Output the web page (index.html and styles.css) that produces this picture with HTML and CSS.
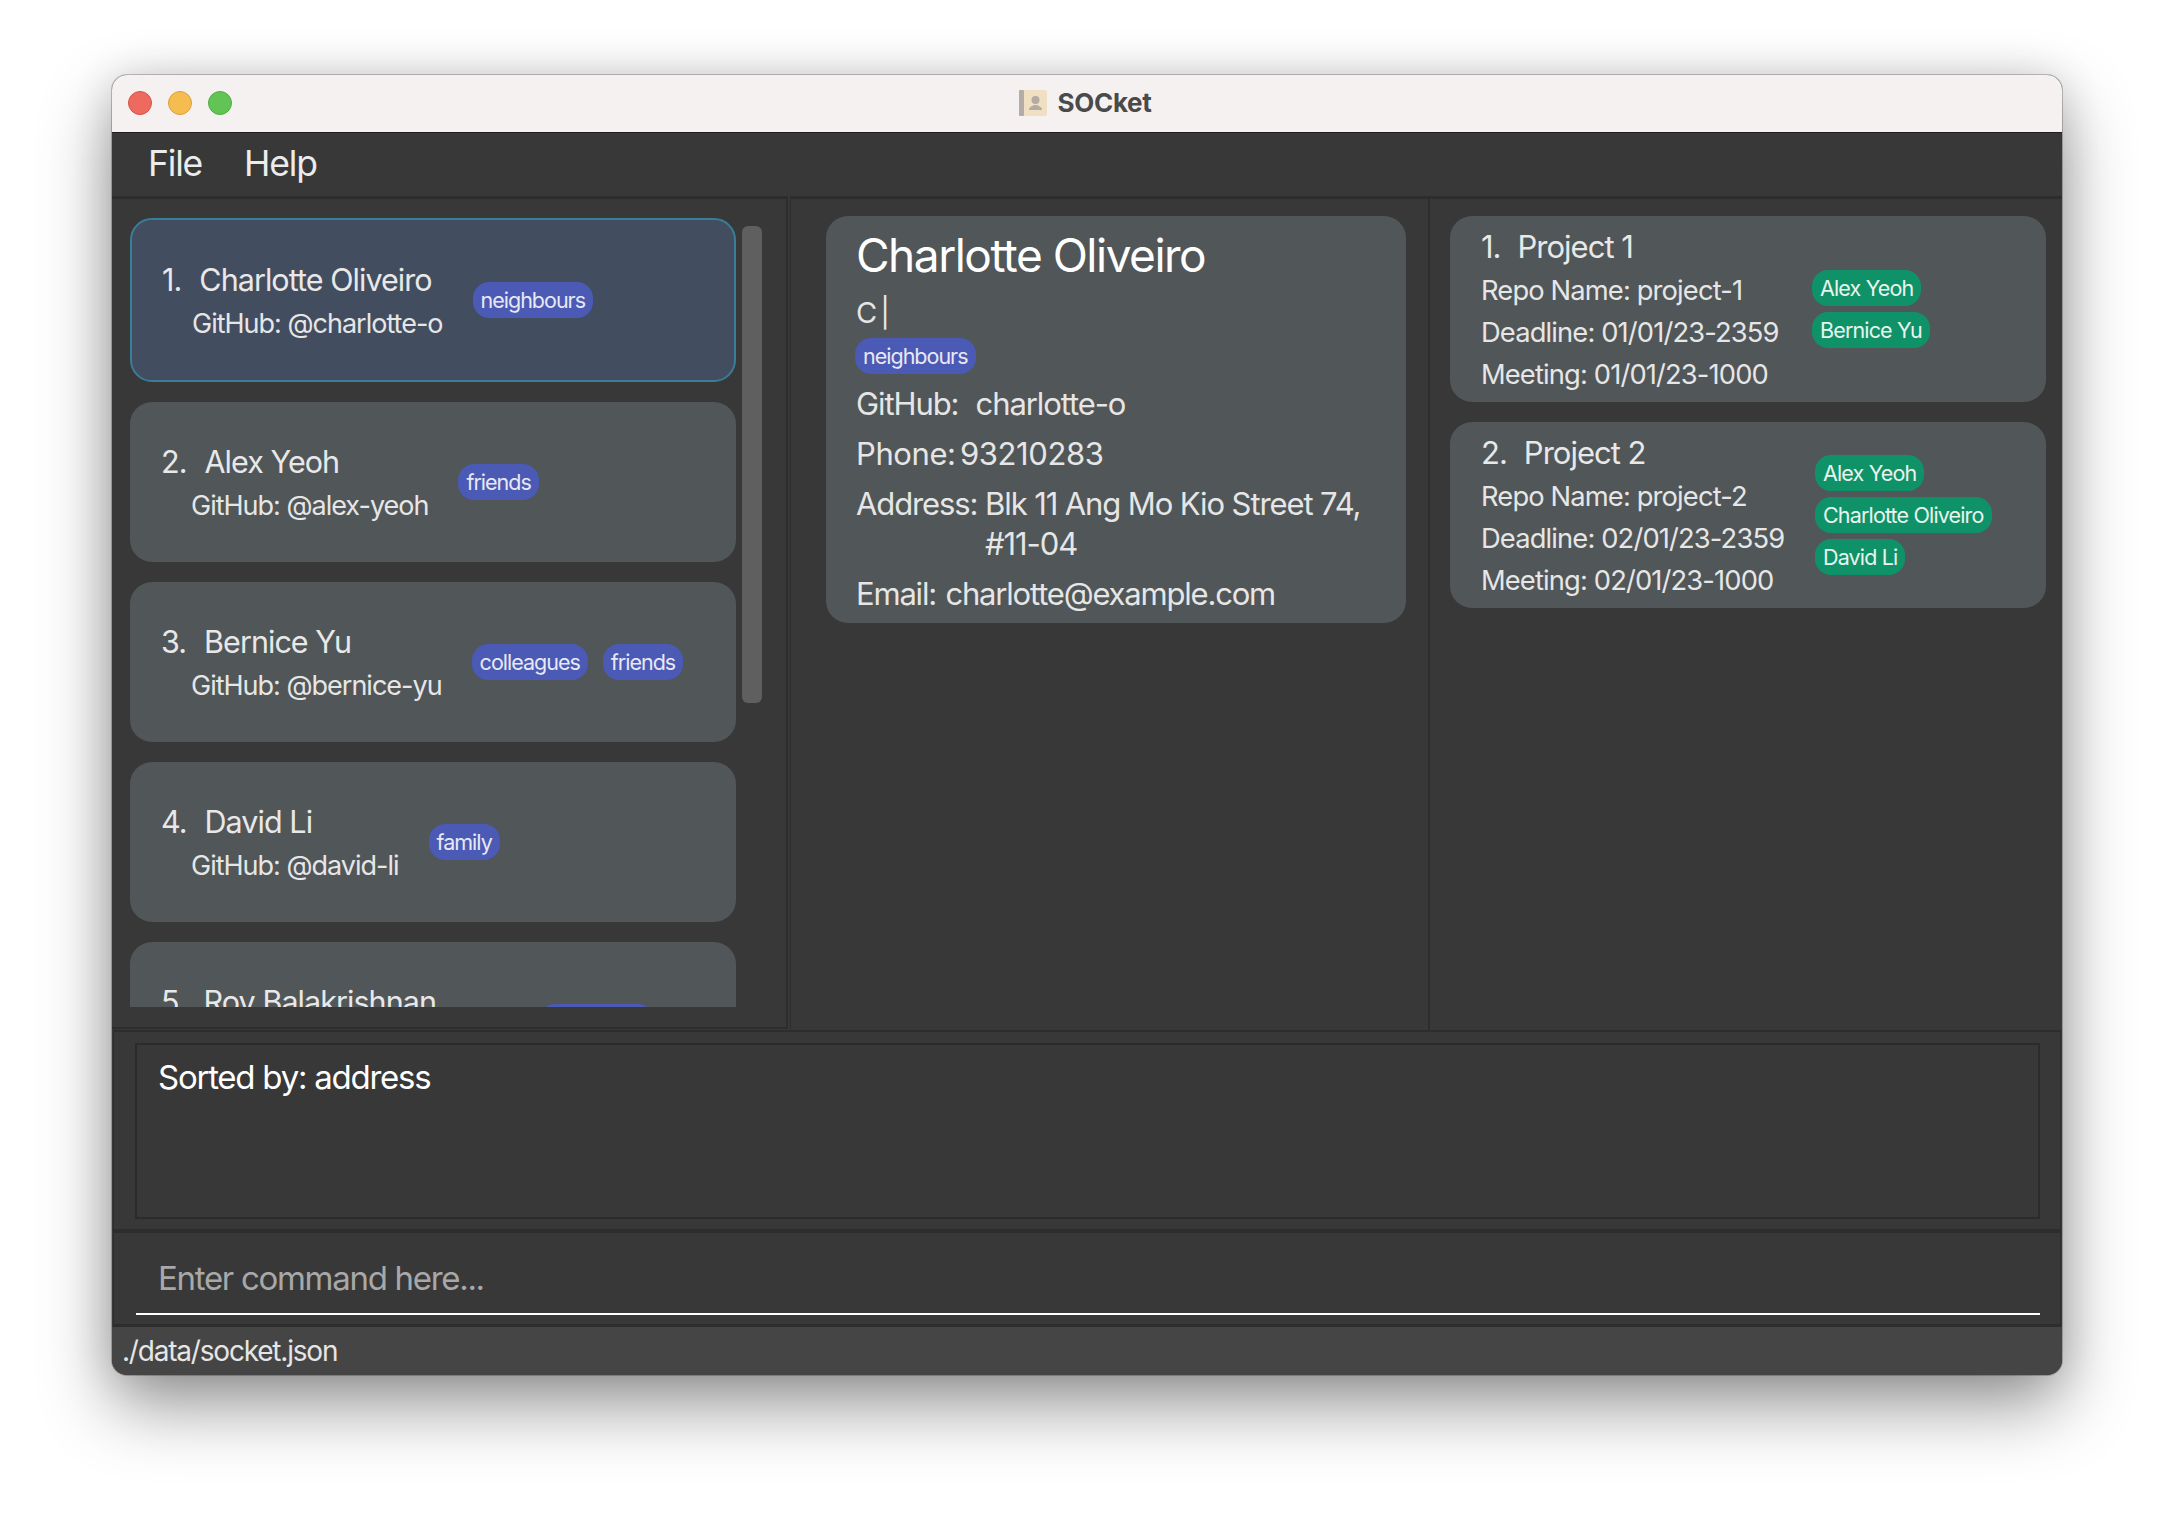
FILE: index.html
```html
<!DOCTYPE html>
<html lang="en">

<head>
    <meta charset="UTF-8">
    <title>SOCket</title>
    <link rel="stylesheet" href="styles.css">
</head>

<body>
    <div class="window">

        <!-- title bar -->
        <div class="titlebar">
            <div class="lights">
                <span class="light red"></span>
                <span class="light yellow"></span>
                <span class="light green"></span>
            </div>
            <div class="title">
                <svg class="title-icon" width="28" height="26" viewBox="0 0 28 26">
                    <rect x="0" y="0" width="28" height="26" rx="2" fill="#f0dfc3"/>
                    <rect x="0" y="0" width="5" height="26" rx="1" fill="#b5aca6"/>
                    <circle cx="16.5" cy="10" r="4" fill="#b3aca4"/>
                    <path d="M10 20 C10 16.5 13.5 16.5 14.5 15 L18.5 15 C19.5 16.5 23 16.5 23 20 Z" fill="#b3aca4"/>
                </svg>
                <span>SOCket</span>
            </div>
            <div></div>
        </div>

        <!-- menu -->
        <div class="menubar">
            <span>File</span>
            <span>Help</span>
        </div>

        <div class="main">

            <!-- person list -->
            <div class="panel panel-left">
                <div class="list-clip">
                    <div class="cards">
                        <div class="card card-person selected">
                            <div class="person-text">
                                <div class="person-name"><span class="num">1.</span>Charlotte Oliveiro</div>
                                <div class="person-github">GitHub: @charlotte-o</div>
                            </div>
                            <div class="tags"><span class="tag">neighbours</span></div>
                        </div>
                        <div class="card card-person">
                            <div class="person-text">
                                <div class="person-name"><span class="num">2.</span>Alex Yeoh</div>
                                <div class="person-github">GitHub: @alex-yeoh</div>
                            </div>
                            <div class="tags"><span class="tag">friends</span></div>
                        </div>
                        <div class="card card-person">
                            <div class="person-text">
                                <div class="person-name"><span class="num">3.</span>Bernice Yu</div>
                                <div class="person-github">GitHub: @bernice-yu</div>
                            </div>
                            <div class="tags"><span class="tag">colleagues</span><span class="tag">friends</span></div>
                        </div>
                        <div class="card card-person">
                            <div class="person-text">
                                <div class="person-name"><span class="num">4.</span>David Li</div>
                                <div class="person-github">GitHub: @david-li</div>
                            </div>
                            <div class="tags"><span class="tag">family</span></div>
                        </div>
                        <!-- scrolled out of view below the name -->
                        <div class="card card-person">
                            <div class="person-text">
                                <div class="person-name"><span class="num">5.</span>Roy Balakrishnan</div>
                                <div class="person-github person-hidden"></div>
                            </div>
                            <div class="tags tags-roy"><span class="tag tag-empty"></span></div>
                        </div>
                    </div>
                </div>
                <div class="scrollbar"></div>
            </div>

            <!-- details -->
            <div class="panel panel-center">
                <div class="card card-detail">
                    <div class="detail-name">Charlotte Oliveiro</div>
                    <div class="detail-role">C |</div>
                    <div class="detail-tags"><span class="tag">neighbours</span></div>
                    <div class="detail-row detail-github">GitHub:&nbsp; charlotte-o</div>
                    <div class="detail-row detail-phone">Phone: 93210283</div>
                    <div class="detail-row detail-address">
                        <span>Address:&nbsp;</span>
                        <span>Blk 11 Ang Mo Kio Street 74,<br>#11-04</span>
                    </div>
                    <div class="detail-row detail-email">Email: charlotte@example.com</div>
                </div>
            </div>

            <!-- projects -->
            <div class="panel panel-right">
                <div class="card card-project">
                    <div class="project-text">
                        <div class="project-name"><span class="num-small">1.</span>Project 1</div>
                        <div class="project-row">Repo Name: project-1</div>
                        <div class="project-row">Deadline: 01/01/23-2359</div>
                        <div class="project-row">Meeting: 01/01/23-1000</div>
                    </div>
                    <div class="chips chips-first">
                        <span class="chip">Alex Yeoh</span>
                        <span class="chip">Bernice Yu</span>
                    </div>
                </div>
                <div class="card card-project">
                    <div class="project-text">
                        <div class="project-name"><span class="num-small">2.</span>Project 2</div>
                        <div class="project-row">Repo Name: project-2</div>
                        <div class="project-row">Deadline: 02/01/23-2359</div>
                        <div class="project-row">Meeting: 02/01/23-1000</div>
                    </div>
                    <div class="chips">
                        <span class="chip">Alex Yeoh</span>
                        <span class="chip">Charlotte Oliveiro</span>
                        <span class="chip">David Li</span>
                    </div>
                </div>
            </div>
        </div>

        <!-- result -->
        <div class="result">
            <div class="result-box">Sorted by: address</div>
        </div>

        <!-- command -->
        <div class="command">
            <div class="command-input">Enter command here...</div>
        </div>

        <div class="statusbar">./data/socket.json</div>
    </div>
</body>

</html>
```

FILE: styles.css
```css
* {
    box-sizing: border-box;
}

body {
    margin: 0;
    width: 2174px;
    height: 1524px;
    padding: 75px 112px 0;
    background-color: white;
    font-family: Inter, "Noto Sans", sans-serif;
    overflow: hidden;
}

.window {
    width: 1950px;
    height: 1300px;
    display: flex;
    flex-direction: column;
    border-radius: 15px;
    background-color: #383838;
    overflow: hidden;
    box-shadow: 0 0 0 1px rgba(0, 0, 0, 0.22), 0 30px 70px rgba(0, 0, 0, 0.42), 0 0 40px rgba(0, 0, 0, 0.12);
    color: #e6e6e6;
}

/* title bar */
.titlebar {
    height: 58px;
    flex: none;
    display: grid;
    grid-template-columns: 1fr auto 1fr;
    align-items: center;
    padding-bottom: 2px;
    background-color: #f6f1f1;
    border-bottom: 1px solid #1e1e1e;
}

.lights {
    display: flex;
    gap: 16px;
    padding-left: 16px;
}

.light {
    width: 24px;
    height: 24px;
    border-radius: 50%;
}

.red {
    background-color: #ee6a5f;
    border: 1px solid #d65348;
}

.yellow {
    background-color: #f5bd4f;
    border: 1px solid #d9a13a;
}

.green {
    background-color: #61c454;
    border: 1px solid #4ead42;
}

.title {
    display: flex;
    align-items: center;
    gap: 11px;
    font-size: 26px;
    font-weight: 700;
    letter-spacing: -0.3px;
    color: #4a4a4a;
    margin-right: 4px;
}

/* menu */
.menubar {
    height: 63px;
    flex: none;
    display: flex;
    align-items: center;
    gap: 42px;
    padding: 0 0 3px 36px;
    font-size: 35.5px;
    letter-spacing: -1.2px;
    color: #ececec;
}

/* panels */
.main {
    flex: none;
    height: 834px;
    display: flex;
}

.panel {
    border-top: 3px solid #2d2d2d;
}

.panel-left {
    width: 676px;
    display: flex;
    margin-bottom: 1px;
    border-right: 2px solid #2d2d2d;
    border-bottom: 2px solid #2d2d2d;
    padding: 19px 0 0 18px;
}

.panel-center {
    width: 638px;
    margin-left: 2px;
    padding: 17px 0 0 35px;
    border-left: 1px solid #2d2d2d;
}

.panel-right {
    flex: 1;
    padding: 17px 16px 0 20px;
    border-left: 2px solid #2d2d2d;
    display: flex;
    flex-direction: column;
    gap: 20px;
}

.card {
    background-color: #515658;
    border-radius: 22px;
}

/* person list */
.list-clip {
    width: 606px;
    height: 789px;
    overflow: hidden;
}

.cards {
    display: flex;
    flex-direction: column;
    gap: 20px;
}

.card-person {
    height: 160px;
    flex: none;
    display: flex;
    align-items: center;
    padding-left: 31px;
}

.selected {
    height: 164px;
    background-color: #424d5f;
    border: 2px solid #3a7d96;
    padding-left: 30px;
}

.person-text {
    display: flex;
    flex-direction: column;
    gap: 12px;
    margin-top: 3px;
}

.person-name {
    font-size: 30.5px;
    line-height: 32px;
    letter-spacing: -0.95px;
    color: #e8e8e8;
}

.num {
    display: inline-block;
    margin-right: 18px;
}

.person-github {
    padding-left: 30px;
    font-size: 27px;
    line-height: 32px;
    letter-spacing: -1px;
}

.person-hidden {
    height: 32px;
}

.tags {
    display: flex;
    gap: 15px;
    margin-left: 30px;
}

.tags-roy {
    margin-left: 103px;
}

.tag {
    height: 36px;
    display: flex;
    align-items: center;
    padding: 0 8px;
    border-radius: 16px;
    background-color: #4a5ab5;
    font-size: 21.5px;
    letter-spacing: -1px;
    color: #e8e8f2;
}

.tag-empty {
    width: 115px;
}

.scrollbar {
    width: 20px;
    height: 477px;
    margin: 8px 0 0 6px;
    border-radius: 6px;
    background-color: #5f5f5f;
}

/* details */
.card-detail {
    width: 580px;
    height: 407px;
    padding: 6px 10px 0 30px;
}

.detail-name {
    font-size: 46px;
    line-height: 66px;
    letter-spacing: -1.5px;
    color: #ffffff;
}

.detail-role {
    font-size: 29px;
    line-height: 40px;
    margin-top: 5px;
    letter-spacing: -1px;
    word-spacing: -3px;
}

.detail-tags {
    display: flex;
    margin: 5px 0 1px -1px;
}

.detail-row {
    font-size: 31px;
    line-height: 40px;
    margin-top: 10px;
    letter-spacing: -1.1px;
}

.detail-github {
    word-spacing: 1px;
}

.detail-phone {
    letter-spacing: -0.4px;
    word-spacing: -4px;
}

.detail-email {
    letter-spacing: -1.2px;
    word-spacing: 2px;
}

.detail-address {
    display: flex;
}

/* projects */
.card-project {
    height: 186px;
    flex: none;
    display: flex;
    padding: 8px 0 0 31px;
}

.project-name {
    font-size: 31px;
    line-height: 46px;
    letter-spacing: -1px;
    color: #e8e8e8;
}

.num-small {
    display: inline-block;
    margin-right: 17px;
}

.project-row {
    font-size: 27.3px;
    line-height: 42.2px;
    letter-spacing: -0.85px;
}

.project-text {
    width: 331px;
}

.chips {
    display: flex;
    flex-direction: column;
    align-items: flex-start;
    gap: 6px;
    margin: 25px 0 0 3px;
}

.chips-first {
    margin: 46px 0 0 0;
}

.chip {
    height: 36px;
    display: flex;
    align-items: center;
    padding: 0 8px;
    border-radius: 16px;
    background-color: #109268;
    font-size: 21.5px;
    letter-spacing: -0.85px;
    color: #e8f4ee;
}

/* bottom bars */
.result {
    height: 203px;
    flex: none;
    margin: 0 1px;
    padding: 11px 20px 0 21px;
    border: 1px solid #2d2d2d;
    border-width: 2px 1px 4px;
}

.result-box {
    height: 176px;
    border: 2px solid #2b2b2b;
    padding: 10px 0 0 21px;
    font-size: 33px;
    line-height: 44px;
    letter-spacing: -1.25px;
    color: #ffffff;
}

.command {
    height: 94px;
    flex: none;
    margin: 0 1px;
    padding: 0 20px 0 22px;
    border: 1px solid #2d2d2d;
    border-width: 0 1px 3px;
}

.command-input {
    height: 82px;
    padding: 23px 0 0 22px;
    border-bottom: 2px solid #ffffff;
    font-size: 33px;
    line-height: 44px;
    letter-spacing: -1.3px;
    color: #a8a8a8;
}

.statusbar {
    flex: 1;
    background-color: #454545;
    padding: 6px 0 0 10px;
    font-size: 28px;
    line-height: 36px;
    letter-spacing: -1.2px;
    color: #e6e6e6;
}
```
